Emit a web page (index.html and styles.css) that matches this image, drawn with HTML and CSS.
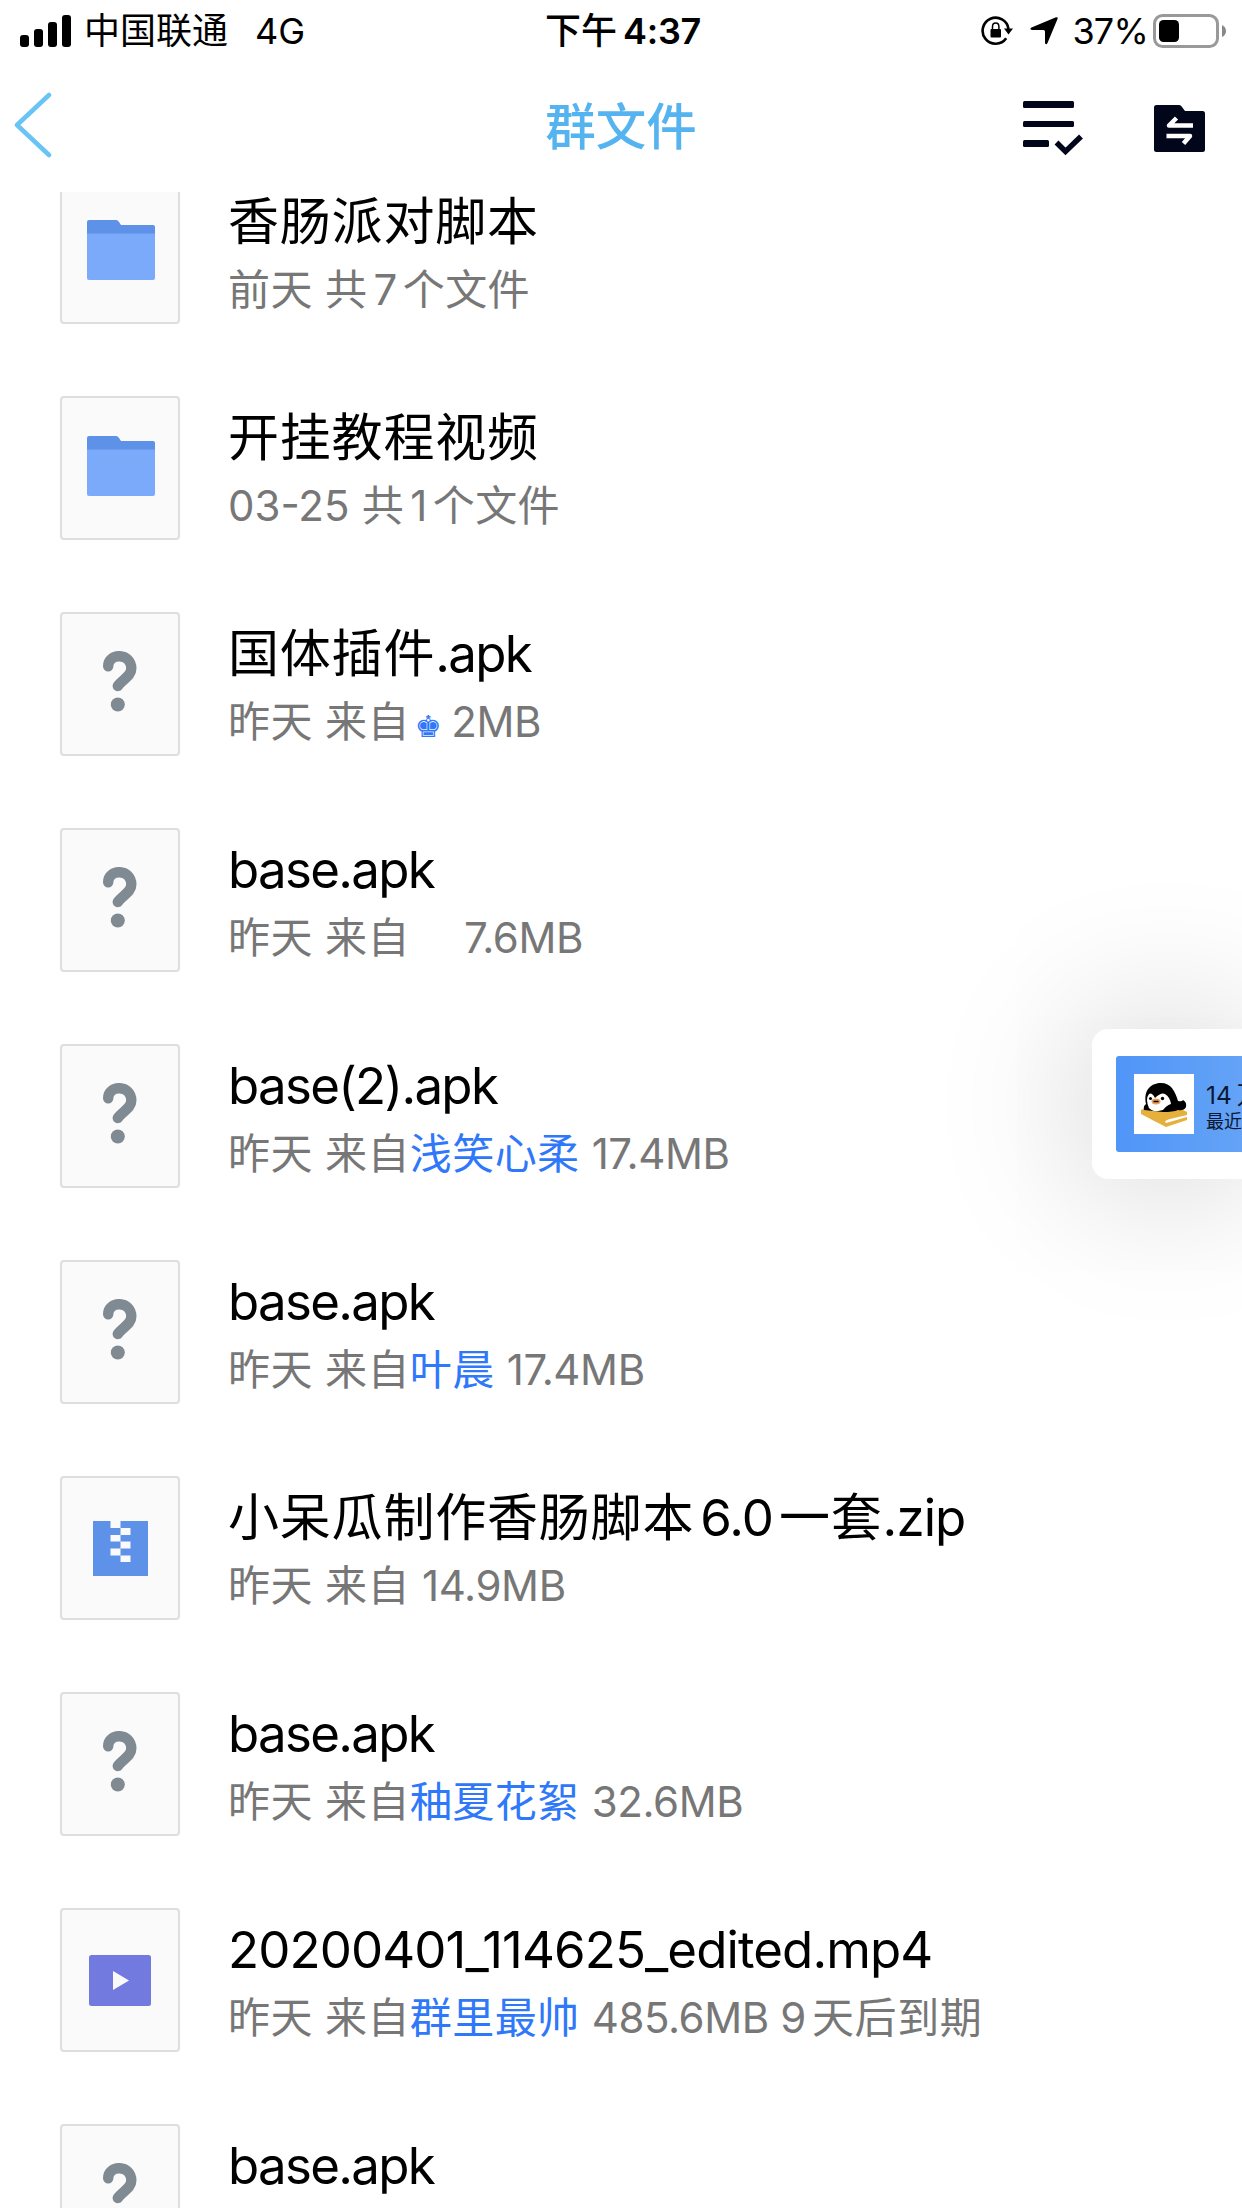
FILE: index.html
```html
<!DOCTYPE html>
<html lang="zh-CN">
<head>
    <meta charset="UTF-8">
    <meta name="viewport" content="width=device-width, initial-scale=1.0">
    <title>群文件</title>
    <link rel="stylesheet" href="styles.css">
</head>
<body>
    <!-- 图标定义 -->
    <svg class="defs" width="0" height="0">
        <symbol id="icon-folder" viewBox="0 0 68 60">
            <path d="M2 0h27q2 0 3 2l2 3h32q2 0 2 2v10H0V2q0-2 2-2z" fill="#5e91e8"/>
            <path d="M0 13.500h68V58q0 2-2 2H2q-2 0-2-2z" fill="#7baafa"/>
        </symbol>
        <symbol id="icon-unknown" viewBox="0 0 34 62">
            <path d="M5.200 15.200C5.200 1.500 28.300 1.500 28.300 17.500C28.300 25.500 19.500 28 14.800 35" fill="none" stroke="#808a92" stroke-width="10.400" stroke-linecap="round" stroke-linejoin="round"/>
            <circle cx="14.800" cy="53.500" r="7" fill="#808a92"/>
        </symbol>
        <symbol id="icon-zip" viewBox="0 0 55 55">
            <path d="M0 0h55v55H0z" fill="#5e91e8"/>
            <path d="M17.500 0h10v7h-10zM27.500 7h10v7h-10zM17.500 14h10v6.500h-10zM27.500 20.500h10v7h-10zM17.500 27.500h10v7h-10zM27.500 34.500h10v6.500h-10z" fill="#fafafa"/>
        </symbol>
        <symbol id="icon-video" viewBox="0 0 62 51">
            <rect width="62" height="51" rx="2.500" fill="#727ae0"/>
            <path d="M24 16l16 9.500L24 35z" fill="#fafafa"/>
        </symbol>
    </svg>

    <div class="status-bar">
        <div class="status-left">
            <svg class="signal" viewBox="0 0 52 32">
                <rect x="0" y="20" width="9" height="12" rx="3"/>
                <rect x="14" y="14" width="9" height="18" rx="3"/>
                <rect x="28" y="7" width="9" height="25" rx="3"/>
                <rect x="42" y="0" width="9" height="32" rx="3"/>
            </svg>
            <span class="carrier">中国联通</span>
            <span class="network">4G</span>
        </div>
        <div class="time">下午<span class="clock">4:37</span></div>
        <div class="status-right">
            <svg class="lock" viewBox="0 0 32 30">
                <path d="M27.500 13A13 13 0 1 0 25.200 22.300" fill="none" stroke="#000" stroke-width="2.600"/>
                <path d="M23 12.500h9l-4.500 6z"/>
                <rect x="9.500" y="13" width="10.500" height="8.500" rx="1"/>
                <path d="M11.500 13.500v-3q0-3.500 3.200-3.500t3.200 3.500v3" fill="none" stroke="#000" stroke-width="1.500"/>
            </svg>
            <svg class="location" viewBox="0 0 28 28">
                <path d="M26 .3Q28.300-.2 27.500 2L17.500 26Q16 28.500 15 26V14.500Q15 13 13.500 13H2Q-1 12 1.500 10.500z"/>
            </svg>
            <span class="percent">37%</span>
            <svg class="battery" viewBox="0 0 73 34">
                <rect x="1.500" y="1.500" width="63" height="31" rx="8" fill="none" stroke="#999" stroke-width="3"/>
                <rect x="6" y="6" width="20" height="22" rx="4.500"/>
                <path d="M69 11q4 2 4 6t-4 6z" fill="#888"/>
            </svg>
        </div>
    </div>

    <div class="nav-bar">
        <svg class="back" viewBox="0 0 38 66">
            <path d="M35 3L3 33l32 30" fill="none" stroke="#69c3f5" stroke-width="4.500" stroke-linecap="round" stroke-linejoin="round"/>
        </svg>
        <div class="nav-title">群文件</div>
        <div class="nav-actions">
            <svg class="select" viewBox="0 0 60 55">
                <rect x="0" y="0" width="51" height="7" rx="1.500"/>
                <rect x="0" y="20" width="51" height="6" rx="1.500"/>
                <rect x="0" y="39" width="26" height="7" rx="1.500"/>
                <path d="M33.500 41.500L42.500 50.500L58 35.500" fill="none" stroke="#02061a" stroke-width="5.500"/>
            </svg>
            <svg class="transfer" viewBox="0 0 51 47">
                <path d="M2.500 0H25q2 0 3 2l3 4h17.500Q51 6 51 8.500v36q0 2.500-2.500 2.500h-46Q0 47 0 44.500v-42Q0 0 2.500 0z"/>
                <path d="M39 20.500H15l7.500-7.500M12.500 31H36l-6.500 7.500" fill="none" stroke="#fff" stroke-width="4.500" stroke-linejoin="round"/>
            </svg>
        </div>
    </div>

    <div class="file-list">
        <div class="list-inner">
            <div class="file">
                <div class="thumb"><svg class="folder"><use href="#icon-folder"/></svg></div>
                <div class="info">
                    <div class="name">香肠派对脚本</div>
                    <div class="meta">前天 共<span class="num count">7</span>个文件</div>
                </div>
            </div>
            <div class="file">
                <div class="thumb"><svg class="folder"><use href="#icon-folder"/></svg></div>
                <div class="info">
                    <div class="name">开挂教程视频</div>
                    <div class="meta"><span class="date">03-25</span> 共<span class="num count">1</span>个文件</div>
                </div>
            </div>
            <div class="file">
                <div class="thumb"><svg class="unknown"><use href="#icon-unknown"/></svg></div>
                <div class="info">
                    <div class="name">国体插件<span class="latin">.apk</span></div>
                    <div class="meta">昨天 来自<span class="user crown">♚</span> <span class="num">2MB</span></div>
                </div>
            </div>
            <div class="file">
                <div class="thumb"><svg class="unknown"><use href="#icon-unknown"/></svg></div>
                <div class="info">
                    <div class="name"><span class="latin">base.apk</span></div>
                    <div class="meta">昨天 来自<span class="user blank"></span> <span class="num">7.6MB</span></div>
                </div>
            </div>
            <div class="file">
                <div class="thumb"><svg class="unknown"><use href="#icon-unknown"/></svg></div>
                <div class="info">
                    <div class="name"><span class="latin">base(2).apk</span></div>
                    <div class="meta">昨天 来自<span class="user">浅笑心柔</span> <span class="num">17.4MB</span></div>
                </div>
            </div>
            <div class="file">
                <div class="thumb"><svg class="unknown"><use href="#icon-unknown"/></svg></div>
                <div class="info">
                    <div class="name"><span class="latin">base.apk</span></div>
                    <div class="meta">昨天 来自<span class="user">叶晨</span> <span class="num">17.4MB</span></div>
                </div>
            </div>
            <div class="file">
                <div class="thumb"><svg class="zip"><use href="#icon-zip"/></svg></div>
                <div class="info">
                    <div class="name">小呆瓜制作香肠脚本<span class="wide count">6.0</span>一套<span class="wide">.zip</span></div>
                    <div class="meta">昨天 来自 <span class="num">14.9MB</span></div>
                </div>
            </div>
            <div class="file">
                <div class="thumb"><svg class="unknown"><use href="#icon-unknown"/></svg></div>
                <div class="info">
                    <div class="name"><span class="latin">base.apk</span></div>
                    <div class="meta">昨天 来自<span class="user">秞夏花絮</span> <span class="num">32.6MB</span></div>
                </div>
            </div>
            <div class="file">
                <div class="thumb"><svg class="video"><use href="#icon-video"/></svg></div>
                <div class="info">
                    <div class="name"><span class="wide">20200401_114625_edited.mp4</span></div>
                    <div class="meta">昨天 来自<span class="user">群里最帅</span> <span class="num">485.6MB 9</span><span class="expire">天后到期</span></div>
                </div>
            </div>
            <div class="file">
                <div class="thumb"><svg class="unknown"><use href="#icon-unknown"/></svg></div>
                <div class="info">
                    <div class="name"><span class="latin">base.apk</span></div>
                    <div class="meta"></div>
                </div>
            </div>
        </div>
    </div>

    <!-- 右侧悬浮窗 -->
    <div class="float-card">
        <div class="float-inner">
            <div class="avatar">
                <svg viewBox="0 0 60 60">
                    <path d="M7 36l4-2 38 2 4 2v3l-17 4q-7 2-4 4l21-6v3L32 53Q20 47 7 40z" fill="#e6b03c"/>
                    <path d="M10 36q-1-4 2-6C9 15 18 9 27 9c10 0 14 8 17 18q4 1 5-1q4 2 3 7q-2 4-8 3q-5 2-15 2z" fill="#000"/>
                    <path d="M15 20q3-2 6 4q6-6 10-4q5 3 6 10q-4 1-8 6-10 3-14-2-4-9 0-14z" fill="#fff"/>
                    <circle cx="16.500" cy="24.500" r="1.500"/>
                    <circle cx="28.500" cy="24.500" r="1.700"/>
                    <ellipse cx="22" cy="27.500" rx="4.500" ry="3" fill="#e8a060"/>
                    <path d="M19.500 27.500h5" stroke="#000" stroke-width="1.300"/>
                </svg>
            </div>
            <div class="float-text">
                <div class="float-count">14<span class="unit">万</span></div>
                <div class="float-desc">最近</div>
            </div>
        </div>
    </div>
</body>
</html>
```

FILE: styles.css
```css
* {
    box-sizing: border-box;
}
body {
    margin: 0;
    height: 2208px;
    display: flex;
    flex-direction: column;
    overflow: hidden;
    position: relative;
    background-color: #fff;
    color: #000;
    font-family: Inter, "Noto Sans CJK SC", sans-serif;
    white-space: nowrap;
}
svg {
    display: block;
    flex-shrink: 0;
}
.defs {
    position: absolute;
}

/* 状态栏 */
.status-bar {
    height: 60px;
    flex-shrink: 0;
    display: grid;
    grid-template-columns: 1fr auto 1fr;
    align-items: center;
    padding: 2px 16px 0 20px;
    font-size: 36px;
    line-height: 56px;
}
.status-left,
.status-right {
    display: flex;
    align-items: center;
}
.status-right {
    justify-content: flex-end;
}
.signal {
    width: 52px;
    height: 32px;
    margin-right: 12px;
}
.carrier {
    margin-right: 27px;
}
.time {
    font-weight: 500;
}
.clock {
    font-weight: 600;
    margin-left: 6px;
    letter-spacing: -0.3px;
}
.lock {
    width: 32px;
    height: 30px;
    margin-right: 17px;
}
.location {
    width: 28px;
    height: 28px;
    margin-right: 14px;
}
.percent {
    letter-spacing: -0.8px;
    margin-right: 5px;
}
.battery {
    width: 73px;
    height: 34px;
}

/* 导航栏 */
.nav-bar {
    height: 132px;
    flex-shrink: 0;
    display: grid;
    grid-template-columns: 1fr auto 1fr;
    align-items: center;
    padding: 2px 37px 0;
}
.back {
    width: 38px;
    height: 66px;
    margin: 0 0 4px -23px;
}
.nav-title {
    color: #55b4f0;
    font-size: 50.5px;
    font-weight: 500;
    line-height: 80px;
}
.nav-actions {
    display: flex;
    justify-content: flex-end;
    align-items: center;
    gap: 71px;
    padding-top: 2px;
    fill: #02061a;
}
.select {
    width: 60px;
    height: 55px;
}
.transfer {
    width: 51px;
    height: 47px;
}

/* 文件列表 */
.file-list {
    flex: 1;
    overflow: hidden;
}
.list-inner {
    margin-top: -48px;
}
.file {
    height: 216px;
    display: flex;
    align-items: center;
    padding-left: 60px;
}
.thumb {
    width: 120px;
    height: 144px;
    flex-shrink: 0;
    display: flex;
    justify-content: center;
    align-items: center;
    margin-right: 48px;
    background-color: #fafafa;
    border: 2px solid #dedede;
    border-radius: 4px;
}
.folder {
    width: 68px;
    height: 60px;
    margin: 0 0 4px 1px;
}
.unknown {
    width: 34px;
    height: 62px;
    margin-bottom: 5px;
}
.zip {
    width: 55px;
    height: 55px;
}
.video {
    width: 62px;
    height: 51px;
}
.info {
    padding-top: 3px;
}
.name {
    height: 72px;
    font-size: 51px;
    letter-spacing: 0.8px;
    line-height: 72px;
}
.meta {
    height: 64px;
    color: #777;
    font-size: 42px;
    letter-spacing: 0.4px;
    line-height: 64px;
}
.latin {
    letter-spacing: -1.7px;
}
.wide {
    letter-spacing: -0.9px;
}
.date {
    letter-spacing: 0;
}
.num {
    letter-spacing: -0.4px;
}
.count {
    margin: 0 6px;
}
.user {
    color: #2f78fa;
}
.crown {
    font-family: "DejaVu Sans", sans-serif;
    font-size: 30px;
    line-height: 1;
    margin: 0 -3px 0 5px;
}
.blank {
    display: inline-block;
    width: 42px;
}
.expire {
    margin-left: 6px;
    letter-spacing: 0.6px;
}

/* 悬浮窗 */
.float-card {
    position: absolute;
    top: 1029px;
    right: 0;
    width: 150px;
    height: 150px;
    padding: 27px 0 27px 24px;
    background-color: #fff;
    border-radius: 16px 0 0 16px;
    box-shadow: 0 0 155px 4px rgba(0, 0, 0, 0.2);
}
.float-inner {
    height: 96px;
    display: flex;
    align-items: center;
    padding-left: 18px;
    overflow: hidden;
    background: linear-gradient(90deg, #5095f8, #64a3f6);
    border-radius: 3px 0 0 3px;
}
.avatar {
    width: 60px;
    height: 60px;
    flex-shrink: 0;
    margin-right: 12px;
    background-color: #fff;
}
.float-text {
    padding-top: 5px;
    color: #0a1730;
}
.float-count {
    font-size: 24.5px;
    line-height: 30px;
}
.unit {
    margin-left: 5px;
}
.float-desc {
    font-size: 18px;
    line-height: 24px;
}
```
